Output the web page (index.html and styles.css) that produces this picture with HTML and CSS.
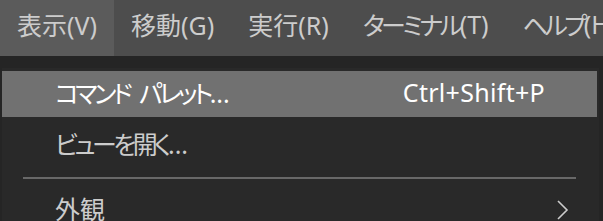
FILE: index.html
```html
<!DOCTYPE html>
<html lang="ja">
<head>
    <meta charset="utf-8">
    <title>メニュー</title>
    <link rel="stylesheet" href="styles.css">
</head>
<body>
    <div class="menubar">
        <div class="menubar-item active">表示(V)</div>
        <div class="menubar-item">移動(G)</div>
        <div class="menubar-item">実行(R)</div>
        <div class="menubar-item"><span class="kana">ターミナル</span>(T)</div>
        <div class="menubar-item"><span class="kana">ヘルプ</span>(H)</div>
    </div>

    <div class="dropdown">
        <div class="menu-row selected">
            <span class="label"><span class="kana">コマンド パレット</span>...</span>
            <span class="keys">Ctrl+Shift+P</span>
        </div>
        <div class="menu-row">
            <span class="label"><span class="kana">ビューを開く</span>...</span>
        </div>
        <div class="separator"></div>
        <div class="menu-row">
            <span class="label">外観</span>
            <svg class="chevron" width="14" height="22" viewBox="0 0 14 22">
                <path d="M2 2 L11 11 L2 20" fill="none" stroke="#cccccc" stroke-width="1.6"/>
            </svg>
        </div>
    </div>
</body>
</html>
```

FILE: styles.css
```css
body {
    margin: 0;
    background-color: #252525;
    font-family: "Noto Sans", "Noto Sans CJK JP", sans-serif;
    font-size: 25px;
    font-feature-settings: "palt";
    color: #cccccc;
    overflow: hidden;
    width: 603px;
    height: 221px;
}
.kana {
    letter-spacing: -3.5px;
    word-spacing: 7px;
}
.menubar {
    display: flex;
    height: 56px;
    background-color: #4d4d4d;
    white-space: nowrap;
}
.menubar-item {
    display: flex;
    align-items: center;
    padding: 0 17px 8px;
    flex-shrink: 0;
}
.menubar-item.active {
    background-color: #5b5b5b;
}
.dropdown {
    margin: 12px 4px 0 2px;
    padding-top: 3px;
    background-color: #292929;
    height: 200px;
}
.menu-row {
    display: flex;
    align-items: center;
    justify-content: space-between;
    box-sizing: border-box;
    height: 46px;
    margin: 0 2px 5px 0;
    padding: 0 27px 4px 53px;
}
.menu-row.selected {
    background-color: #717171;
    color: #ffffff;
    padding-right: 52px;
}
.keys {
    letter-spacing: 0.3px;
}
.separator {
    height: 2px;
    margin: 9px 23px 8px 21px;
    background-color: #686868;
}
.chevron {
    display: block;
    margin-top: 4px;
}
```
